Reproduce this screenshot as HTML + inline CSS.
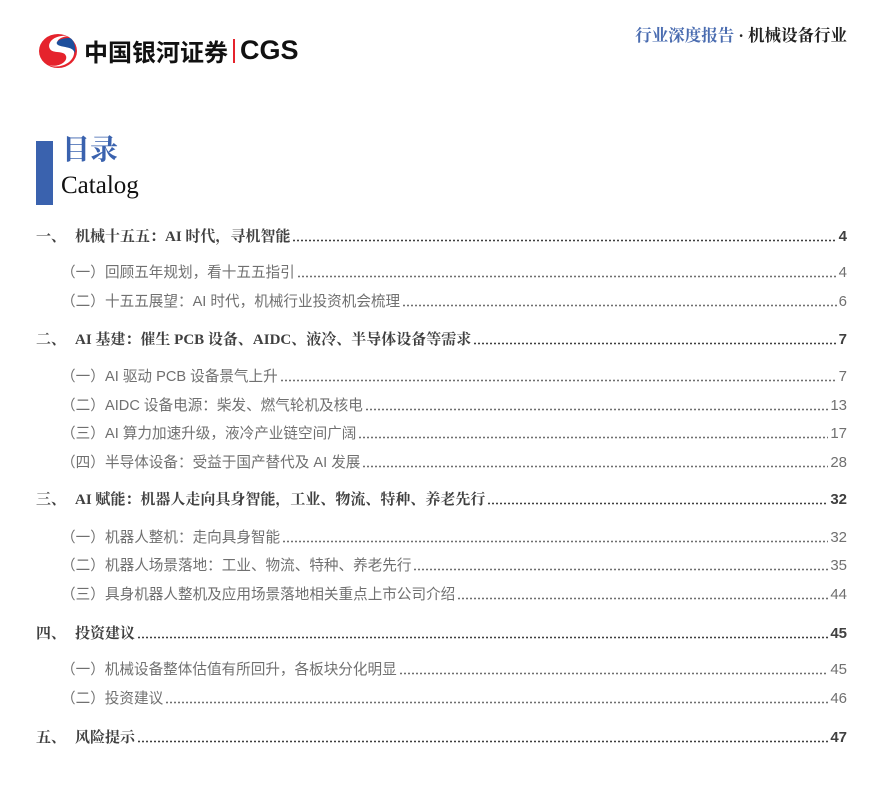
<!DOCTYPE html>
<html><head><meta charset="utf-8"><style>
body{margin:0;width:873px;height:795px;background:#fff;position:relative;overflow:hidden;font-family:"Liberation Serif","Noto Serif CJK SC",serif}
.r{position:absolute;left:36px;width:811px;height:20px;line-height:20px;display:flex;align-items:center;font-size:15px;white-space:nowrap}
.l1{color:#404040;font-weight:bold;font-family:"Liberation Serif","Noto Serif CJK SC",serif}
.l2{color:#707070;font-family:"Liberation Sans","Noto Sans CJK SC",sans-serif;font-size:14.6px;left:61px;width:786px}
.n{display:inline-block}
.l1 .n{width:39px}
.l2 .n{width:44px}
.l2.c .n{width:auto}
.d{flex:1;height:3px;margin:7px 2px 0 2px;background:radial-gradient(circle,currentColor 0.8px,transparent 1.1px) 0 0/4px 3px repeat-x;align-self:center}
.p{font-family:"Liberation Sans",sans-serif;font-size:15px}
</style></head><body>
<svg style="position:absolute;left:38px;top:32px" width="40" height="38" viewBox="0 0 40 38">
<ellipse cx="20" cy="19" rx="19" ry="17" fill="#e5232c"/>
<path d="M30 4 C18 2 8 10 12 17 C15 22 26 18 28 24 C30 30 20 36 10 33 C22 38 38 30 36 18 C34 10 24 14 20 11 C18 9 22 5 30 4Z" fill="#fff"/>
<path d="M32 6 C22 6 16 10 20 13 C25 16 36 14 37 22 C38 14 36 8 32 6Z" fill="#1d4f9c"/>
</svg>
<div style="position:absolute;left:84px;top:35px;font-family:'Noto Sans CJK SC',sans-serif;font-weight:bold;font-size:24px;line-height:32px;color:#111">中国银河证券</div>
<div style="position:absolute;left:233px;top:39px;width:2px;height:24px;background:#e5232c"></div>
<div style="position:absolute;left:240px;top:33px;font-family:'Liberation Sans',sans-serif;font-weight:bold;font-size:27px;line-height:34px;color:#111">CGS</div>
<div style="position:absolute;right:26px;top:25px;font-size:16.5px;line-height:22px;font-weight:bold;font-family:'Liberation Serif','Noto Serif CJK SC',serif;color:#4a6cb0">行业深度报告 <span style="color:#222">· 机械设备行业</span></div>
<div style="position:absolute;left:36px;top:141px;width:17px;height:64px;background:#3a62ae"></div>
<div style="position:absolute;left:62px;top:134px;font-size:28px;line-height:34px;font-weight:bold;color:#3a62ae;font-family:'Liberation Serif','Noto Serif CJK SC',serif">目录</div>
<div style="position:absolute;left:61px;top:170px;font-size:25px;line-height:32px;color:#111">Catalog</div>

<div class="r l1" style="top:227px"><span class="n">一、</span>机械十五五：AI 时代，寻机智能<span class="d"></span><span class="p">4</span></div>
<div class="r l2" style="top:263px"><span class="n">（一）</span>回顾五年规划，看十五五指引<span class="d"></span><span class="p">4</span></div>
<div class="r l2" style="top:292px"><span class="n">（二）</span>十五五展望：AI 时代，机械行业投资机会梳理<span class="d"></span><span class="p">6</span></div>
<div class="r l1" style="top:330px"><span class="n">二、</span>AI 基建：催生 PCB 设备、AIDC、液冷、半导体设备等需求<span class="d"></span><span class="p">7</span></div>
<div class="r l2" style="top:367px"><span class="n">（一）</span>AI 驱动 PCB 设备景气上升<span class="d"></span><span class="p">7</span></div>
<div class="r l2" style="top:396px"><span class="n">（二）</span>AIDC 设备电源：柴发、燃气轮机及核电<span class="d"></span><span class="p">13</span></div>
<div class="r l2" style="top:424px"><span class="n">（三）</span>AI 算力加速升级，液冷产业链空间广阔<span class="d"></span><span class="p">17</span></div>
<div class="r l2" style="top:453px"><span class="n">（四）</span>半导体设备：受益于国产替代及 AI 发展<span class="d"></span><span class="p">28</span></div>
<div class="r l1" style="top:490px"><span class="n">三、</span>AI 赋能：机器人走向具身智能，工业、物流、特种、养老先行<span class="d"></span><span class="p">32</span></div>
<div class="r l2" style="top:528px"><span class="n">（一）</span>机器人整机：走向具身智能<span class="d"></span><span class="p">32</span></div>
<div class="r l2" style="top:556px"><span class="n">（二）</span>机器人场景落地：工业、物流、特种、养老先行<span class="d"></span><span class="p">35</span></div>
<div class="r l2" style="top:585px"><span class="n">（三）</span>具身机器人整机及应用场景落地相关重点上市公司介绍<span class="d"></span><span class="p">44</span></div>
<div class="r l1" style="top:624px"><span class="n">四、</span>投资建议<span class="d"></span><span class="p">45</span></div>
<div class="r l2 c" style="top:660px"><span class="n">（一）</span>机械设备整体估值有所回升，各板块分化明显<span class="d"></span><span class="p">45</span></div>
<div class="r l2 c" style="top:689px"><span class="n">（二）</span>投资建议<span class="d"></span><span class="p">46</span></div>
<div class="r l1" style="top:728px"><span class="n">五、</span>风险提示<span class="d"></span><span class="p">47</span></div>
</body></html>
